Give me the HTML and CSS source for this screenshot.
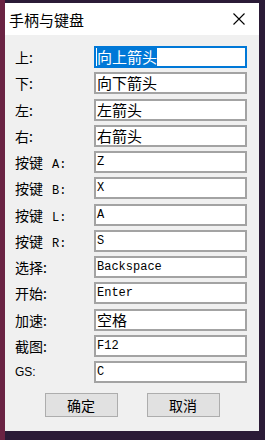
FILE: index.html
```html
<!DOCTYPE html>
<html lang="zh-CN">
<head>
    <meta charset="UTF-8">
    <title>手柄与键盘</title>
    <link rel="stylesheet" href="styles.css">
</head>
<body>

    <!-- Dialog window -->
    <div class="window">
        <div class="titlebar">
            <span class="title">手柄与键盘</span>
            <svg class="close" width="12" height="12" viewBox="0 0 12 12">
                <path d="M0.5 0.5 L11.5 11.5 M11.5 0.5 L0.5 11.5" stroke="#000" stroke-width="1.1" fill="none"/>
            </svg>
        </div>

        <!-- Key bindings -->
        <div class="form">
            <div class="label">上:</div>
            <div class="field focused"><span class="sel">向上箭头</span></div>

            <div class="label">下:</div>
            <div class="field">向下箭头</div>

            <div class="label">左:</div>
            <div class="field">左箭头</div>

            <div class="label">右:</div>
            <div class="field">右箭头</div>

            <div class="label">按键<span class="key">A:</span></div>
            <div class="field mono">Z</div>

            <div class="label">按键<span class="key">B:</span></div>
            <div class="field mono">X</div>

            <div class="label">按键<span class="key">L:</span></div>
            <div class="field mono">A</div>

            <div class="label">按键<span class="key">R:</span></div>
            <div class="field mono">S</div>

            <div class="label">选择:</div>
            <div class="field mono">Backspace</div>

            <div class="label">开始:</div>
            <div class="field mono">Enter</div>

            <div class="label">加速:</div>
            <div class="field">空格</div>

            <div class="label">截图:</div>
            <div class="field mono">F12</div>

            <div class="label small">GS:</div>
            <div class="field mono">C</div>
        </div>

        <div class="buttons">
            <button class="btn">确定</button>
            <button class="btn">取消</button>
        </div>
    </div>

</body>
</html>
```

FILE: styles.css
```css
/* Page and backdrop */
body {
    margin: 0;
    height: 440px;
    overflow: hidden;
    background: linear-gradient(to right, #6a2343 0, #6a2343 5px, #2b1b37 5px);
    font-family: "Noto Sans CJK SC", sans-serif;
    color: #000;
}

.window {
    width: 254px;
    height: 428px;
    margin: 3px 0 0 5px;
    background-color: #f0f0f0;
    display: flex;
    flex-direction: column;
}

/* Title bar */
.titlebar {
    height: 32px;
    background-color: #fff;
    display: flex;
    align-items: center;
    justify-content: space-between;
    padding: 0 14px 0 4px;
}

.title {
    font-size: 15px;
    line-height: 1;
}

.close {
    display: block;
}

/* Form rows */
.form {
    display: grid;
    grid-template-columns: 79px 153px;
    grid-auto-rows: 22px;
    row-gap: 4.25px;
    padding: 11px 0 0 10px;
}

.label {
    font-size: 14px;
    line-height: 22px;
    white-space: nowrap;
}

.label .key {
    font-family: "Liberation Mono", monospace;
    font-size: 12px;
    margin-left: 9px;
}

.label.small {
    font-family: "Liberation Sans", sans-serif;
    font-size: 12px;
}

.field {
    box-sizing: border-box;
    height: 22px;
    border: 2px solid #a3a3a3;
    background-color: #fff;
    padding-left: 1px;
    font-size: 15px;
    line-height: 18px;
    white-space: nowrap;
    overflow: hidden;
}

.field.mono {
    font-family: "Liberation Mono", monospace;
    font-size: 12px;
}

.field.focused {
    border-color: #0078d7;
}

.sel {
    background-color: #0078d7;
    color: #fff;
}

/* Buttons */
.buttons {
    display: flex;
    justify-content: center;
    gap: 29px;
    margin-top: 10px;
}

.btn {
    width: 73px;
    height: 24px;
    background-color: #e1e1e1;
    border: 1px solid #adadad;
    font-family: "Noto Sans CJK SC", sans-serif;
    font-size: 14px;
    padding: 0;
}
```
